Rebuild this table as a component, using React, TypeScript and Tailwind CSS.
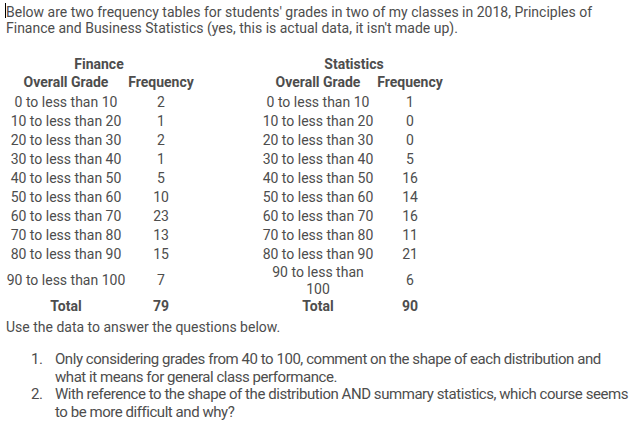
import React from "react";

const finance: [string, string][] = [
  ["0 to less than 10", "2"],
  ["10 to less than 20", "1"],
  ["20 to less than 30", "2"],
  ["30 to less than 40", "1"],
  ["40 to less than 50", "5"],
  ["50 to less than 60", "10"],
  ["60 to less than 70", "23"],
  ["70 to less than 80", "13"],
  ["80 to less than 90", "15"],
  ["90 to less than 100", "7"],
];

const stats: [string, string][] = [
  ["0 to less than 10", "1"],
  ["10 to less than 20", "0"],
  ["20 to less than 30", "0"],
  ["30 to less than 40", "5"],
  ["40 to less than 50", "16"],
  ["50 to less than 60", "14"],
  ["60 to less than 70", "16"],
  ["70 to less than 80", "11"],
  ["80 to less than 90", "21"],
  ["90 to less than 100", "6"],
];

const cell = "p-0 py-[1px] leading-[17px] align-middle";
const lastCell = "p-0 py-0 leading-[16.5px] align-middle";
const head = "p-0 font-bold leading-[17px] pt-[1px] pb-[2px]";

export default function App() {
  return (
    <div
      className="relative w-[636px] h-[426px] bg-white text-[#4d4d4d] text-[14px] overflow-hidden"
      style={{ fontFamily: "Roboto, 'Liberation Sans', sans-serif" }}
    >
      <span className="absolute left-[5px] top-[3px] w-[1px] h-[15px] bg-black" />
      <p className="pl-[6px] pt-[4px] leading-[16px] pr-[20px]">
        Below are two frequency tables for students' grades in two of my classes in 2018, Principles of
        Finance and Business Statistics (yes, this is actual data, it isn't made up).
      </p>
      <table className="table-fixed border-collapse text-center mt-[19px] ml-[4px]">
        <colgroup>
          <col className="w-[124px]" />
          <col className="w-[66px]" />
          <col className="w-[68px]" />
          <col className="w-[112px]" />
          <col className="w-[72px]" />
        </colgroup>
        <tbody>
          <tr>
            <td colSpan={2} className="p-0 font-bold leading-[17px] pt-[1px]">
              Finance
            </td>
            <td className="p-0" />
            <td colSpan={2} className="p-0 font-bold leading-[17px] pt-[1px]">
              Statistics
            </td>
          </tr>
          <tr>
            <td className={head}>Overall Grade</td>
            <td className={head}>Frequency</td>
            <td className="p-0" />
            <td className={head}>Overall Grade</td>
            <td className={head}>Frequency</td>
          </tr>
          {finance.map(([g, f], i) => {
            const c = i === finance.length - 1 ? lastCell : cell;
            return (
              <tr key={g}>
                <td className={c}>{g}</td>
                <td className={c}>{f}</td>
                <td className="p-0" />
                <td className={c}>{stats[i][0]}</td>
                <td className={c}>{stats[i][1]}</td>
              </tr>
            );
          })}
          <tr>
            <td className={cell + " font-bold"}>Total</td>
            <td className={cell + " font-bold"}>79</td>
            <td className="p-0" />
            <td className={cell + " font-bold"}>Total</td>
            <td className={cell + " font-bold"}>90</td>
          </tr>
        </tbody>
      </table>
      <p className="pl-[6px] mt-[3px] leading-[16px]">Use the data to answer the questions below.</p>
      <ol className="mt-[16px] text-[15px] leading-[17.5px] tracking-[-0.45px]">
        {[
          "Only considering grades from 40 to 100, comment on the shape of each distribution and what it means for general class performance.",
          "With reference to the shape of the distribution AND summary statistics, which course seems to be more difficult and why?",
        ].map((t, i) => (
          <li key={i} className="flex">
            <span className="pl-[31px] w-[55px] shrink-0">{i + 1}.</span>
            <span className="w-[576px]">{t}</span>
          </li>
        ))}
      </ol>
    </div>
  );
}
